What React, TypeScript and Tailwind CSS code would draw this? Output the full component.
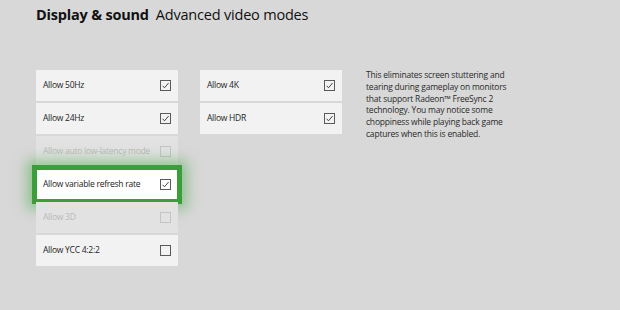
import React from 'react';

type Row = { label: string; checked: boolean; disabled?: boolean; focused?: boolean };

const leftRows: Row[] = [
  { label: 'Allow 50Hz', checked: true },
  { label: 'Allow 24Hz', checked: true },
  { label: 'Allow auto low-latency mode', checked: false, disabled: true },
  { label: 'Allow variable refresh rate', checked: true, focused: true },
  { label: 'Allow 3D', checked: false, disabled: true },
  { label: 'Allow YCC 4:2:2', checked: false },
];

const rightRows: Row[] = [
  { label: 'Allow 4K', checked: true },
  { label: 'Allow HDR', checked: true },
];

const CheckBox = ({ checked, disabled }: { checked: boolean; disabled?: boolean }) => (
  <div
    className={
      disabled
        ? 'w-[11px] h-[11px] border border-[#c4c4c4] flex items-center justify-center'
        : 'w-[11px] h-[11px] border border-[#5a5a5a] flex items-center justify-center'
    }
  >
    {checked && (
      <svg width="9" height="9" viewBox="0 0 9 9">
        <path d="M1.6 4.8 L3.5 6.8 L7.6 2" fill="none" stroke="#333" strokeWidth="0.9" />
      </svg>
    )}
  </div>
);

const SettingRow = ({ row }: { row: Row }) => (
  <div
    className={
      'relative h-[31px] flex items-center justify-between pl-[7px] pr-[7px] ' +
      (row.disabled ? 'bg-[#e2e2e2]' : row.focused ? 'bg-white' : 'bg-[#f2f2f2]')
    }
  >
    {row.focused && (
      <div className="absolute -inset-[4px] border-[5px] border-[#3b9e3b] shadow-[0_0_12px_5px_rgba(70,170,70,0.5)] pointer-events-none" />
    )}
    <span className={'text-[8.5px] tracking-[-0.25px] ' + (row.disabled ? 'text-[#b9b9b9]' : 'text-[#222]')}>
      {row.label}
    </span>
    <CheckBox checked={row.checked} disabled={row.disabled} />
  </div>
);

export default function App() {
  return (
    <div
      className="w-[620px] h-[310px] bg-[#d8d8d8] pl-[36px] pt-[4px] overflow-hidden"
      style={{ fontFamily: '"Open Sans", "Noto Sans", sans-serif' }}
    >
      <div className="flex items-baseline gap-[7px] text-[14.5px] tracking-[-0.2px] text-[#111] h-[24px]">
        <span className="font-bold">Display &amp; sound</span>
        <span>Advanced video modes</span>
      </div>

      <div className="flex items-start mt-[42px]">
        <div className="w-[142px] flex flex-col gap-[2px]">
          {leftRows.map((r) => (
            <SettingRow key={r.label} row={r} />
          ))}
        </div>
        <div className="w-[142px] ml-[22px] flex flex-col gap-[2px]">
          {rightRows.map((r) => (
            <SettingRow key={r.label} row={r} />
          ))}
        </div>
        <p className="ml-[24px] w-[150px] -mt-[1px] text-[8.5px] tracking-[-0.2px] leading-[11.8px] text-[#2a2a2a]">
          This eliminates screen stuttering and tearing during gameplay on monitors that support Radeon™ FreeSync 2
          technology. You may notice some choppiness while playing back game captures when this is enabled.
        </p>
      </div>
    </div>
  );
}
